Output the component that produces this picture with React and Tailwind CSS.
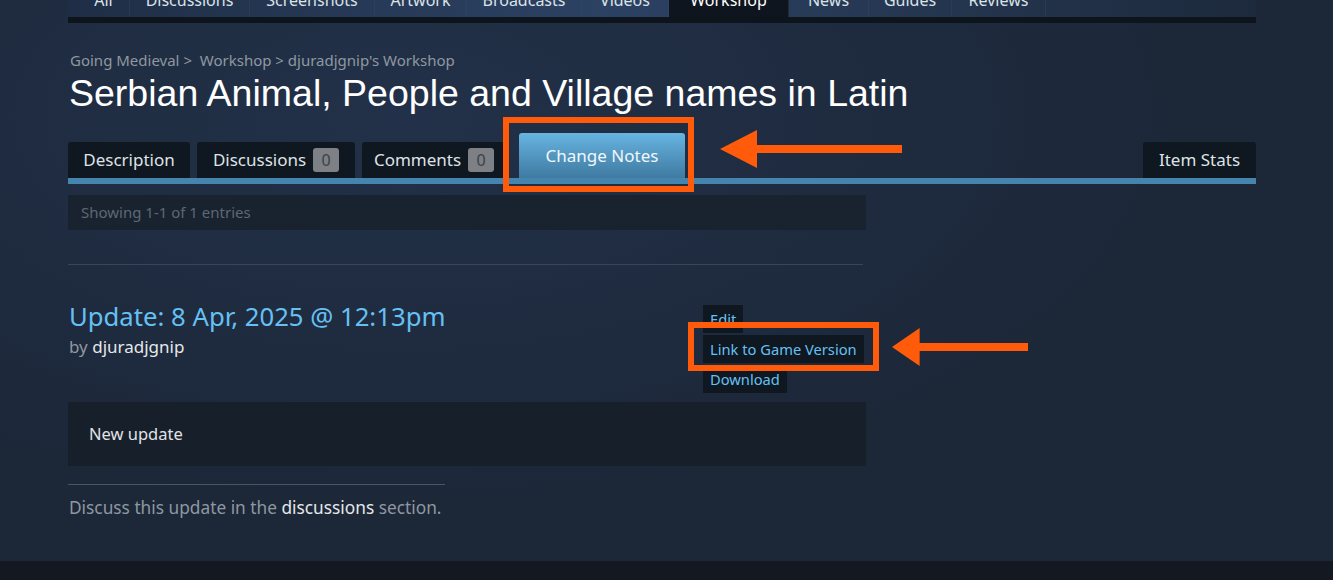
import React from 'react';

const topTabs = [
  { label: 'All', w: 'w-[62px] pl-[10px]' },
  { label: 'Discussions', w: 'w-[120px]' },
  { label: 'Screenshots', w: 'w-[125px]' },
  { label: 'Artwork', w: 'w-[92px]' },
  { label: 'Broadcasts', w: 'w-[115px]' },
  { label: 'Videos', w: 'w-[87px]' },
  { label: 'Workshop', w: 'w-[120px]', active: true },
  { label: 'News', w: 'w-[80px]' },
  { label: 'Guides', w: 'w-[83px]' },
  { label: 'Reviews', w: 'w-[94px]' },
];

function Badge({ n }) {
  return (
    <span className="ml-[7px] flex h-[24px] w-[26px] items-center justify-center rounded-[3px] bg-[#7d8084] text-[16px] text-[#3b4148]">
      {n}
    </span>
  );
}

function Arrow({ className }) {
  // left-pointing annotation arrow
  return (
    <svg className={className} viewBox="0 0 182 38" preserveAspectRatio="none">
      <polygon points="0,19 37,0 37,15 182,15 182,23 37,23 37,38" fill="#ff5b0a" />
    </svg>
  );
}

export default function App() {
  return (
    <div className="relative h-[580px] overflow-hidden bg-[#1c2738] bg-[radial-gradient(ellipse_at_30%_20%,#223149_0%,#1c2738_60%)] font-['Noto_Sans',sans-serif]">
      <div className="flex h-[561px] flex-col pl-[68px]">
        {/* top hub nav, mostly scrolled off */}
        <div className="-mt-[17px] flex h-[34px] w-[1188px] bg-linear-to-r from-[#1f2e46] via-[#2c4263] via-45% to-[#1d2a3d] text-[16px] text-[#dce3e8]">
          {topTabs.map((t) => (
            <div
              key={t.label}
              className={`flex h-full shrink-0 items-center justify-center border-r border-[#34496a]/40 ${t.w} ${t.active ? 'bg-[#0f151e] text-white' : ''}`}
            >
              {t.label}
            </div>
          ))}
        </div>
        <div className="h-[6px] w-[1188px] bg-[#0e141b]" />

        {/* breadcrumb + title */}
        <div className="mt-[27px] h-[20px] pl-[2px] text-[15px] leading-[20px] text-[#8f98a0]">
          Going Medieval &gt;&nbsp; Workshop &gt; djuradjgnip's Workshop
        </div>
        <h1 className="mt-[2px] h-[42px] pl-px font-['Liberation_Sans',Arial,sans-serif] text-[37.5px] leading-[42px] text-white">
          Serbian Animal, People and Village names in Latin
        </h1>

        {/* item tabs */}
        <div className="mt-[19px] flex h-[45px] w-[1188px] items-end text-[17px] text-[#dfe3e6]">
          <div className="flex h-[36px] w-[122px] items-center justify-center rounded-t-[3px] bg-[#0f1720]">Description</div>
          <div className="ml-[7px] flex h-[36px] w-[158px] items-center justify-center rounded-t-[3px] bg-[#0f1720]">
            Discussions <Badge n="0" />
          </div>
          <div className="ml-[7px] flex h-[36px] w-[144px] items-center justify-center rounded-t-[3px] bg-[#0f1720]">
            Comments <Badge n="0" />
          </div>
          <div className="ml-[13px] flex h-[45px] w-[166px] items-center justify-center rounded-t-[3px] bg-linear-to-b from-[#67b5e2] to-[#3f7aa1] text-[#f2f7fa]">
            Change Notes
          </div>
          <div className="ml-auto flex h-[36px] w-[113px] items-center justify-center rounded-t-[3px] bg-[#0f1720]">Item Stats</div>
        </div>
        <div className="h-[6px] w-[1188px] bg-[#4584ac]" />

        {/* change notes list */}
        <div className="mt-[11px] flex h-[35px] w-[798px] items-center bg-[#19222f] px-[13px] text-[15px] text-[#5d6874]">
          Showing 1-1 of 1 entries
        </div>
        <div className="mt-[34px] h-px w-[795px] bg-[#3a4656]" />

        <div className="mt-[37px] flex w-[798px]">
          <div className="flex-1 pl-px">
            <div className="h-[30px] text-[25.7px] leading-[30px] text-[#66c0f4]">Update: 8 Apr, 2025 @ 12:13pm</div>
            <div className="mt-[4px] text-[17px] leading-[22px] text-[#8f98a0]">
              by <span className="text-[#e5e8ea]">djuradjgnip</span>
            </div>
          </div>
          <div className="mt-[3px] flex w-[163px] shrink-0 flex-col items-start gap-[2px] whitespace-nowrap text-[14.7px] text-[#66c0f4]">
            <div className="flex h-[28px] items-center bg-[#0f1720] px-[7px]">Edit</div>
            <div className="flex h-[28px] items-center bg-[#0f1720] px-[7px]">Link to Game Version</div>
            <div className="flex h-[28px] items-center bg-[#0f1720] px-[7px]">Download</div>
          </div>
        </div>

        <div className="mt-[9px] flex h-[64px] w-[798px] items-center bg-[#171f2b] px-[21px] text-[16.5px] text-[#e0e3e6]">
          New update
        </div>
        <div className="mt-[18px] h-px w-[377px] bg-[#4a5563]" />
        <div className="mt-[12px] pl-px text-[17.3px] leading-[22px] text-[#8f98a0]">
          Discuss this update in the <span className="text-[#e5e8ea]">discussions</span> section.
        </div>
      </div>
      <div className="h-[19px] bg-[#141821]" />

      {/* annotations */}
      <div className="absolute left-[503px] top-[117px] h-[75px] w-[191px] border-[6px] border-[#ff5b0a]" />
      <Arrow className="absolute left-[720px] top-[130px] h-[38px] w-[182px]" />
      <div className="absolute left-[688px] top-[322px] h-[49px] w-[191px] border-[6px] border-[#ff5b0a]" />
      <Arrow className="absolute left-[892px] top-[328px] h-[38px] w-[136px]" />
    </div>
  );
}
